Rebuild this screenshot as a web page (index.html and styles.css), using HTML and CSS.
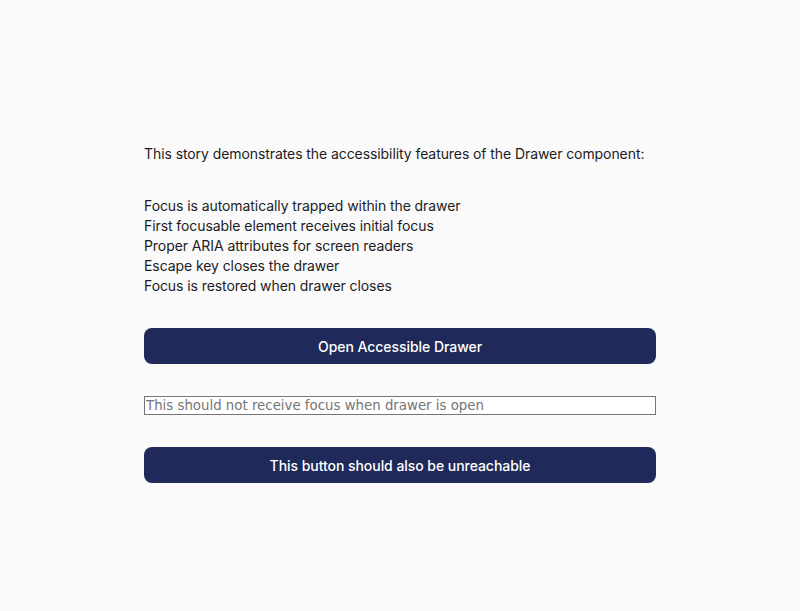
FILE: index.html
```html
<!DOCTYPE html>
<html lang="en">
<head>
<meta charset="utf-8">
<title>Drawer accessibility</title>
<link rel="stylesheet" href="styles.css">
</head>
<body>
<main class="story">
  <p class="intro">This story demonstrates the accessibility features of the Drawer component:</p>
  <ul class="features">
    <li>Focus is automatically trapped within the drawer</li>
    <li>First focusable element receives initial focus</li>
    <li>Proper ARIA attributes for screen readers</li>
    <li>Escape key closes the drawer</li>
    <li>Focus is restored when drawer closes</li>
  </ul>
  <button class="btn" type="button">Open Accessible Drawer</button>
  <input class="field" type="text" placeholder="This should not receive focus when drawer is open">
  <button class="btn" type="button">This button should also be unreachable</button>
</main>
</body>
</html>
```
FILE: styles.css
```css
html, body {
  margin: 0;
  padding: 0;
  background: #fafafa;
}

body {
  font-family: Inter, "Noto Sans", sans-serif;
  font-size: 14px;
  line-height: 20px;
  letter-spacing: -0.08px;
  color: #1c1c1e;
}

.story {
  width: 512px;
  margin: 0 auto;
  padding-top: 144px;
  display: flex;
  flex-direction: column;
  gap: 32px;
}

.intro {
  margin: 0;
}

.features {
  margin: 0;
  padding: 0;
  list-style: none;
}

.btn {
  height: 36px;
  border: none;
  border-radius: 8px;
  background: #1f2a5a;
  color: #ffffff;
  font-family: Inter, "Noto Sans", sans-serif;
  font-size: 14px;
  font-weight: 500;
  letter-spacing: -0.05px;
  cursor: pointer;
}

.field {
  margin: 0;
  padding: 1px 1px;
  border: 1px solid #767676;
  font-family: "DejaVu Sans", sans-serif;
  font-size: 13.333px;
  letter-spacing: 0;
  background: #ffffff;
  color: #1c1c1e;
}

.field::placeholder {
  color: #757575;
}
```
